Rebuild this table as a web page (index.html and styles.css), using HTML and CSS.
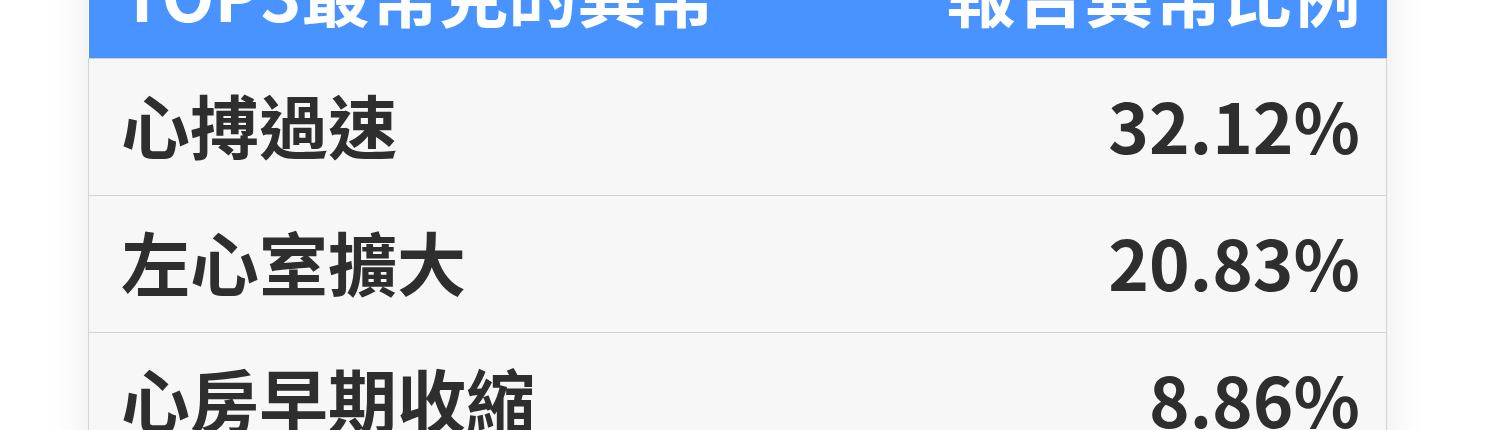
FILE: index.html
```html
<!DOCTYPE html>
<html lang="zh-Hant">
<head>
  <meta charset="UTF-8">
  <title>TOP3 最常見的異常</title>
  <link rel="stylesheet" href="styles.css">
</head>
<body>
  <div class="card">
    <table class="stats">
      <thead>
        <tr>
          <th class="name">TOP3最常見的異常</th>
          <th class="ratio">報告異常比例</th>
        </tr>
      </thead>
      <tbody>
        <tr>
          <td class="name">心搏過速</td>
          <td class="ratio">32.12%</td>
        </tr>
        <tr>
          <td class="name">左心室擴大</td>
          <td class="ratio">20.83%</td>
        </tr>
        <tr>
          <td class="name">心房早期收縮</td>
          <td class="ratio">8.86%</td>
        </tr>
      </tbody>
    </table>
  </div>
</body>
</html>
```

FILE: styles.css
```css
body {
  margin: 0;
  background: #fff;
  font-family: "Noto Sans CJK TC", "Noto Sans", sans-serif;
  color: #2e2e2e;
  overflow: hidden;
}

/* Card */
.card {
  width: 1299px;
  margin: -77px 0 0 88px;
  box-shadow: 0 0 40px rgba(0,0,0,0.09);
}

.stats {
  width: 100%;
  border-collapse: collapse;
  font-size: 69px;
  font-weight: 700;
  line-height: 102px;
}
.stats th,
.stats td {
  padding: 14px 26px 20px 32px;
  white-space: nowrap;
}
.stats th {
  background: #4893ff;
  color: #fff;
  padding-top: 18px;
  padding-bottom: 15px;
}
.stats td {
  background: #f7f7f7;
  border: 1px solid #d2d2d2;
  border-width: 1px 1px 0 1px;
}
.stats .name { text-align: left; }
.stats .ratio { text-align: right; }
.stats td.name { border-right: none; }
.stats td.ratio { border-left: none; }
```
